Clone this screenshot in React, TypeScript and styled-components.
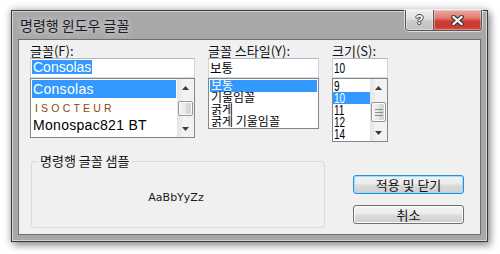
import React from "react";
import styled, { createGlobalStyle } from "styled-components";

const KR = `"Noto Sans CJK KR", "Liberation Sans", sans-serif`;
const LAT = `"Liberation Sans", "Noto Sans CJK KR", sans-serif`;

const GlobalStyle = createGlobalStyle`
  html, body {
    margin: 0;
    padding: 0;
    background: #fff;
  }
  body {
    font-family: ${KR};
    font-size: 13px;
    color: #000;
  }
`;

const Stage = styled.div`
  width: 500px;
  height: 254px;
  padding: 10px 0 0 11px;
  box-sizing: border-box;
`;

const Window = styled.div`
  width: 477px;
  height: 232px;
  box-sizing: border-box;
  border: 1px solid #3a3a3a;
  background: #a8a8a8;
  box-shadow: inset 1px 1px 0 #d4d4d4, inset -1px -1px 0 #d4d4d4,
    0 0 7px 1px rgba(0, 0, 0, 0.25), 3px 4px 7px rgba(0, 0, 0, 0.3);
  padding: 0 6px 6px;
  display: flex;
  flex-direction: column;
`;

const TitleBar = styled.div`
  height: 28px;
  display: flex;
  align-items: flex-start;
  flex-shrink: 0;
`;

const Title = styled.div`
  align-self: center;
  padding-left: 2px;
  font-size: 14px;
  line-height: 16px;
  color: #1e1a2a;
  text-shadow: 0 0 6px rgba(255, 255, 255, 0.55), 0 0 10px rgba(255, 255, 255, 0.4);
`;

const CaptionGroup = styled.div`
  margin: -1px -1px 0 auto;
  height: 20px;
  display: flex;
  border: 1px solid #555;
  border-top: none;
  border-radius: 0 0 4px 4px;
  overflow: hidden;
  box-shadow: 0 0 0 1px rgba(255, 255, 255, 0.6);
`;

const CaptionButton = styled.div<{ $close?: boolean }>`
  width: ${(p) => (p.$close ? "47px" : "27px")};
  display: flex;
  align-items: center;
  justify-content: center;
  background: ${(p) =>
    p.$close
      ? "linear-gradient(#eca7a0 0%, #e07c73 40%, #cf3f33 55%, #c9392d 80%, #d25044 100%)"
      : "linear-gradient(#f0f0f0 0%, #dedede 45%, #c9c9c9 55%, #c2c2c2 100%)"};
  border-left: ${(p) => (p.$close ? "1px solid #5a5a5a" : "none")};
  box-shadow: inset 0 0 0 1px rgba(255, 255, 255, 0.35);
`;

const HelpMark = styled.span`
  font-family: ${LAT};
  font-weight: bold;
  font-size: 13px;
  line-height: 14px;
  color: #fff;
  text-shadow: 1px 0 0 #3c3c3c, -1px 0 0 #3c3c3c, 0 1px 0 #3c3c3c, 0 -1px 0 #3c3c3c;
`;

const Client = styled.div`
  flex: 1;
  background: #f0f0f0;
  border: 1px solid #6e6e6e;
  padding: 4px 0 0 11px;
  display: flex;
  flex-direction: column;
`;

const TopRow = styled.div`
  display: flex;
  gap: 13px;
  align-items: flex-start;
`;

const Column = styled.div<{ $w: number }>`
  width: ${(p) => p.$w}px;
  display: flex;
  flex-direction: column;
`;

const Label = styled.div`
  height: 14px;
  line-height: 14px;
  font-size: 13px;
  white-space: nowrap;
  color: #111;
`;

const TextBox = styled.div<{ $lat?: boolean }>`
  height: 20px;
  box-sizing: border-box;
  border: 1px solid;
  border-color: #a9b7c7 #c8d6e4 #d2dfea #c8d6e4;
  background: #fff;
  padding: 0 1px;
  display: flex;
  align-items: center;
  font-family: ${(p) => (p.$lat ? LAT : KR)};
  font-size: ${(p) => (p.$lat ? "14px" : "12.5px")};
  line-height: 14px;
`;

const Selected = styled.span`
  background: #3399ff;
  color: #fff;
  padding: 0 1px;
  margin-top: -2px;
`;

const ListBox = styled.div<{ $h: number }>`
  height: ${(p) => p.$h}px;
  box-sizing: border-box;
  border: 1px solid #828790;
  background: #fff;
  display: flex;
`;

const Items = styled.div<{ $pad: number }>`
  flex: 1;
  padding: 1px ${(p) => p.$pad}px;
  overflow: hidden;
`;

const Row = styled.div<{ $h: number; $sel?: boolean }>`
  height: ${(p) => p.$h}px;
  line-height: ${(p) => p.$h}px;
  padding-left: 1px;
  white-space: nowrap;
  background: ${(p) => (p.$sel ? "#3399ff" : "transparent")};
  color: ${(p) => (p.$sel ? "#fff" : "#000")};
`;

const FontName = styled.span`
  font-family: ${LAT};
  font-size: 14px;
  letter-spacing: 0.3px;
`;

const DecoName = styled.span`
  font-family: ${LAT};
  font-size: 10.5px;
  letter-spacing: 3.2px;
  color: #8c4515;
  padding-left: 2px;
`;

const StyleName = styled.span`
  display: block;
  font-size: 12px;
  line-height: 12px;
  transform: translateY(-1px);
`;

const Narrow = styled.span`
  display: inline-block;
  font-family: ${LAT};
  font-size: 14px;
  line-height: 12px;
  transform: scaleX(0.72);
  transform-origin: left center;
`;

const ScrollBar = styled.div`
  width: 17px;
  display: flex;
  flex-direction: column;
  background: linear-gradient(90deg, #e4e4e4, #f3f3f3 40%, #f1f1f1);
  flex-shrink: 0;
`;

const ArrowCell = styled.div`
  height: 17px;
  display: flex;
  align-items: center;
  justify-content: center;
  flex-shrink: 0;
`;

const Track = styled.div`
  flex: 1;
  display: flex;
  flex-direction: column;
`;

const Thumb = styled.div<{ $top: number; $h: number }>`
  margin: ${(p) => p.$top}px 1px 0;
  height: ${(p) => p.$h}px;
  box-sizing: border-box;
  border: 1px solid #979797;
  border-radius: 2px;
  background: linear-gradient(90deg, #f3f3f3, #e9e9e9 50%, #dbdbdb 51%, #d3d3d3);
  box-shadow: inset 0 0 0 1px #fbfbfb;
  display: flex;
  align-items: center;
  justify-content: center;
`;

const BottomRow = styled.div`
  display: flex;
  align-items: flex-start;
  margin-top: 12px;
`;

const SampleBox = styled.fieldset`
  margin: 0 0 0 1px;
  width: 294px;
  height: 74px;
  box-sizing: border-box;
  border: 1px solid #d3dde4;
  border-radius: 3px;
  padding: 0 4px 0 0;
  display: flex;
  align-items: center;
  justify-content: center;
`;

const SampleLegend = styled.legend`
  margin-left: 6px;
  padding: 0 2px;
  font-size: 13px;
  line-height: 14px;
  color: #111;
`;

const SampleText = styled.div`
  font-family: "DejaVu Sans", sans-serif;
  font-size: 11px;
  color: #1a1a1a;
`;

const ButtonColumn = styled.div`
  margin: 21px 0 0 28px;
  display: flex;
  flex-direction: column;
  gap: 11px;
`;

const PushButton = styled.div<{ $default?: boolean }>`
  width: 111px;
  height: 19px;
  box-sizing: border-box;
  border: 1px solid ${(p) => (p.$default ? "#2f8fd3" : "#707070")};
  border-radius: 3px;
  background: linear-gradient(#f3f3f3 0%, #ebebeb 48%, #dcdcdc 52%, #cfcfcf 100%);
  box-shadow: inset 0 0 0 1px ${(p) => (p.$default ? "#8fe4fb" : "#fbfbfb")};
  display: flex;
  align-items: center;
  justify-content: center;
  font-size: 13px;
  line-height: 16px;
  color: #111;
`;

const UpArrow = () => (
  <svg width="7" height="4" viewBox="0 0 7 4">
    <path d="M0 4 L3.5 0 L7 4 Z" fill="#3b3b3b" />
  </svg>
);

const DownArrow = () => (
  <svg width="7" height="4" viewBox="0 0 7 4">
    <path d="M0 0 L7 0 L3.5 4 Z" fill="#3b3b3b" />
  </svg>
);

const Grip = () => (
  <svg width="8" height="7" viewBox="0 0 8 7">
    <path d="M0 0.5 H8 M0 3.5 H8 M0 6.5 H8" stroke="#8c8c8c" strokeWidth="1" />
  </svg>
);

const CloseGlyph = () => (
  <svg width="13" height="11" viewBox="0 0 13 11">
    <path d="M2.5 2 L10.5 9 M10.5 2 L2.5 9" stroke="#3a3a3a" strokeWidth="4.4" strokeLinecap="square" />
    <path d="M2.5 2 L10.5 9 M10.5 2 L2.5 9" stroke="#fff" strokeWidth="2.2" strokeLinecap="square" />
  </svg>
);

const VScroll: React.FC<{ top: number; h: number; grip?: boolean }> = ({ top, h, grip }) => (
  <ScrollBar>
    <ArrowCell>
      <UpArrow />
    </ArrowCell>
    <Track>
      <Thumb $top={top} $h={h}>
        {grip && <Grip />}
      </Thumb>
    </Track>
    <ArrowCell>
      <DownArrow />
    </ArrowCell>
  </ScrollBar>
);

const styles = ["보통", "기울임꼴", "굵게", "굵게 기울임꼴"];
const sizes = ["9", "10", "11", "12", "14"];

export default function App() {
  return (
    <Stage>
      <GlobalStyle />
      <Window>
        <TitleBar>
          <Title>명령행 윈도우 글꼴</Title>
          <CaptionGroup>
            <CaptionButton>
              <HelpMark>?</HelpMark>
            </CaptionButton>
            <CaptionButton $close>
              <CloseGlyph />
            </CaptionButton>
          </CaptionGroup>
        </TitleBar>
        <Client>
          <TopRow>
            <Column $w={165}>
              <Label>글꼴(F):</Label>
              <TextBox $lat>
                <Selected>Consolas</Selected>
              </TextBox>
              <ListBox $h={60}>
                <Items $pad={1}>
                  <Row $h={18} $sel>
                    <FontName>Consolas</FontName>
                  </Row>
                  <Row $h={18}>
                    <DecoName>ISOCTEUR</DecoName>
                  </Row>
                  <Row $h={18}>
                    <FontName>Monospac821 BT</FontName>
                  </Row>
                </Items>
                <VScroll top={5} h={15} />
              </ListBox>
            </Column>
            <Column $w={111}>
              <Label>글꼴 스타일(Y):</Label>
              <TextBox>보통</TextBox>
              <ListBox $h={51}>
                <Items $pad={1}>
                  {styles.map((s, i) => (
                    <Row key={s} $h={12} $sel={i === 0}>
                      <StyleName>{s}</StyleName>
                    </Row>
                  ))}
                </Items>
              </ListBox>
            </Column>
            <Column $w={56}>
              <Label>크기(S):</Label>
              <TextBox $lat>
                <Narrow>10</Narrow>
              </TextBox>
              <ListBox $h={64}>
                <Items $pad={0}>
                  {sizes.map((s) => (
                    <Row key={s} $h={12} $sel={s === "10"}>
                      <Narrow>{s}</Narrow>
                    </Row>
                  ))}
                </Items>
                <VScroll top={6} h={20} grip />
              </ListBox>
            </Column>
          </TopRow>
          <BottomRow>
            <SampleBox>
              <SampleLegend>명령행 글꼴 샘플</SampleLegend>
              <SampleText>AaBbYyZz</SampleText>
            </SampleBox>
            <ButtonColumn>
              <PushButton $default>적용 및 닫기</PushButton>
              <PushButton>취소</PushButton>
            </ButtonColumn>
          </BottomRow>
        </Client>
      </Window>
    </Stage>
  );
}
